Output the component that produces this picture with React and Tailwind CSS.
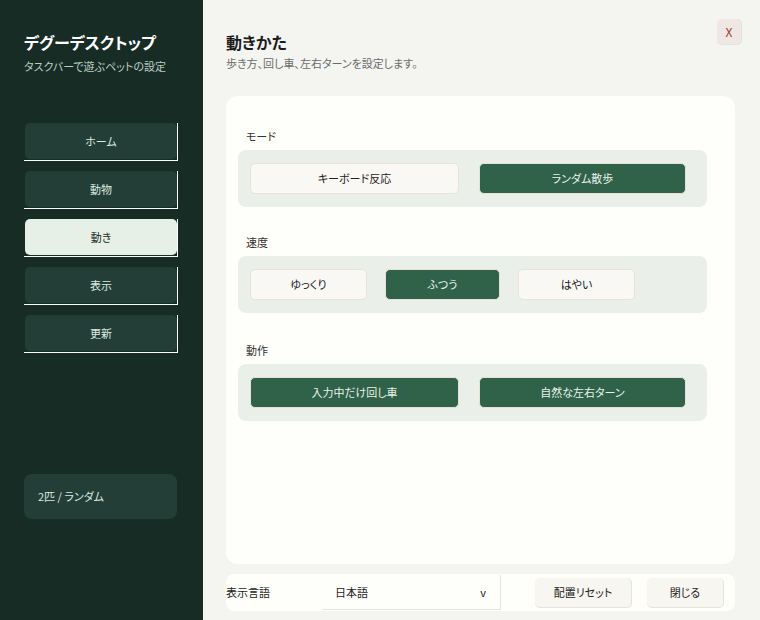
const navItems = ["ホーム", "動物", "動き", "表示", "更新"];

const NavButton = ({ label, active }) => (
  <div className="w-[154px] h-[38px] border-r border-b border-white mb-[10px]">
    <div
      className={
        "ml-[1px] mt-[1px] w-[152px] h-[36px] rounded-[5px] flex items-center justify-center text-[11px] " +
        (active ? "bg-[#e7f0e6] text-[#1d2b25]" : "bg-[#233e36] text-[#dbe8e0]")
      }
    >
      {label}
    </div>
  </div>
);

const Choice = ({ label, on, className }) => (
  <div
    className={
      "h-[31px] flex items-center justify-center text-[11px] rounded-[5px] border " +
      (on ? "bg-[#2f6249] border-[#e6e1d3] text-[#e8f2ec]" : "bg-[#f9f8f4] border-[#e8e3d6] text-[#222]") +
      " " +
      className
    }
  >
    {label}
  </div>
);

const Section = ({ title, children, className }) => (
  <div className={className}>
    <div className="pl-[8px] text-[11px] leading-[16px] text-[#333]">{title}</div>
    <div className="mt-[6px] w-[469px] h-[57px] rounded-[8px] bg-[#eaefea] flex items-center pl-[12px]">
      {children}
    </div>
  </div>
);

export default function App() {
  return (
    <div className="w-[760px] h-[620px] flex overflow-hidden font-['Noto_Sans_CJK_JP','Noto_Sans',sans-serif] [font-feature-settings:'palt']">
      <aside className="w-[203px] h-full bg-[#182c26] flex flex-col pl-[24px] pt-[30px]">
        <div className="text-[16px] leading-[24px] font-bold text-white">デグーデスクトップ</div>
        <div className="mt-[4px] text-[11px] leading-[16px] text-[#b9cdc3]">タスクバーで遊ぶペットの設定</div>
        <nav className="mt-[48px]">
          {navItems.map((n) => (
            <NavButton key={n} label={n} active={n === "動き"} />
          ))}
        </nav>
        <div className="mt-auto mb-[101px] w-[153px] h-[45px] rounded-[8px] bg-[#233e36] flex items-center pl-[14px] text-[11px] text-[#dbe8e0]">
          2匹 / ランダム
        </div>
      </aside>

      <main className="flex-1 h-full bg-[#f4f5f1] pl-[23px] pr-[25px] pt-[30px] relative">
        <button className="absolute top-[19px] right-[18px] w-[25px] h-[26px] rounded-[5px] bg-[#f0e6e4] border-r border-b border-[#e4e2dc] text-[12px] text-[#9b3b3b] flex items-center justify-center">
          X
        </button>
        <h1 className="text-[16px] leading-[24px] font-bold text-[#1c1c1c]">動きかた</h1>
        <p className="mt-[1px] text-[11px] leading-[16px] text-[#6b6b6b]">歩き方、回し車、左右ターンを設定します。</p>

        <div className="mt-[25px] h-[468px] rounded-[12px] bg-[#fefefa] pl-[12px] pt-[32px]">
          <Section title="モード">
            <Choice label="キーボード反応" className="w-[209px]" />
            <Choice label="ランダム散歩" on className="w-[207px] ml-[20px]" />
          </Section>
          <Section title="速度" className="mt-[27px]">
            <Choice label="ゆっくり" className="w-[117px]" />
            <Choice label="ふつう" on className="w-[115px] ml-[18px]" />
            <Choice label="はやい" className="w-[117px] ml-[18px]" />
          </Section>
          <Section title="動作" className="mt-[29px]">
            <Choice label="入力中だけ回し車" on className="w-[209px]" />
            <Choice label="自然な左右ターン" on className="w-[207px] ml-[20px]" />
          </Section>
        </div>

        <div className="mt-[10px] h-[37px] rounded-[8px] bg-[#fefefa] flex items-center">
          <span className="text-[11px] text-[#222] w-[96px]">表示言語</span>
          <div className="w-[179px] h-[35px] border-r border-b border-[#e4e3dd] flex items-center pl-[13px] pr-[14px] text-[11px] text-[#222]">
            <span className="flex-1">日本語</span>
            <span>v</span>
          </div>
          <button className="ml-[34px] w-[97px] h-[30px] rounded-[5px] bg-[#f7f6f1] border-r border-b border-[#e4e3dd] text-[11px] text-[#222]">
            配置リセット
          </button>
          <button className="ml-[15px] w-[77px] h-[30px] rounded-[5px] bg-[#f7f6f1] border-r border-b border-[#e4e3dd] text-[11px] text-[#222]">
            閉じる
          </button>
        </div>
      </main>
    </div>
  );
}
